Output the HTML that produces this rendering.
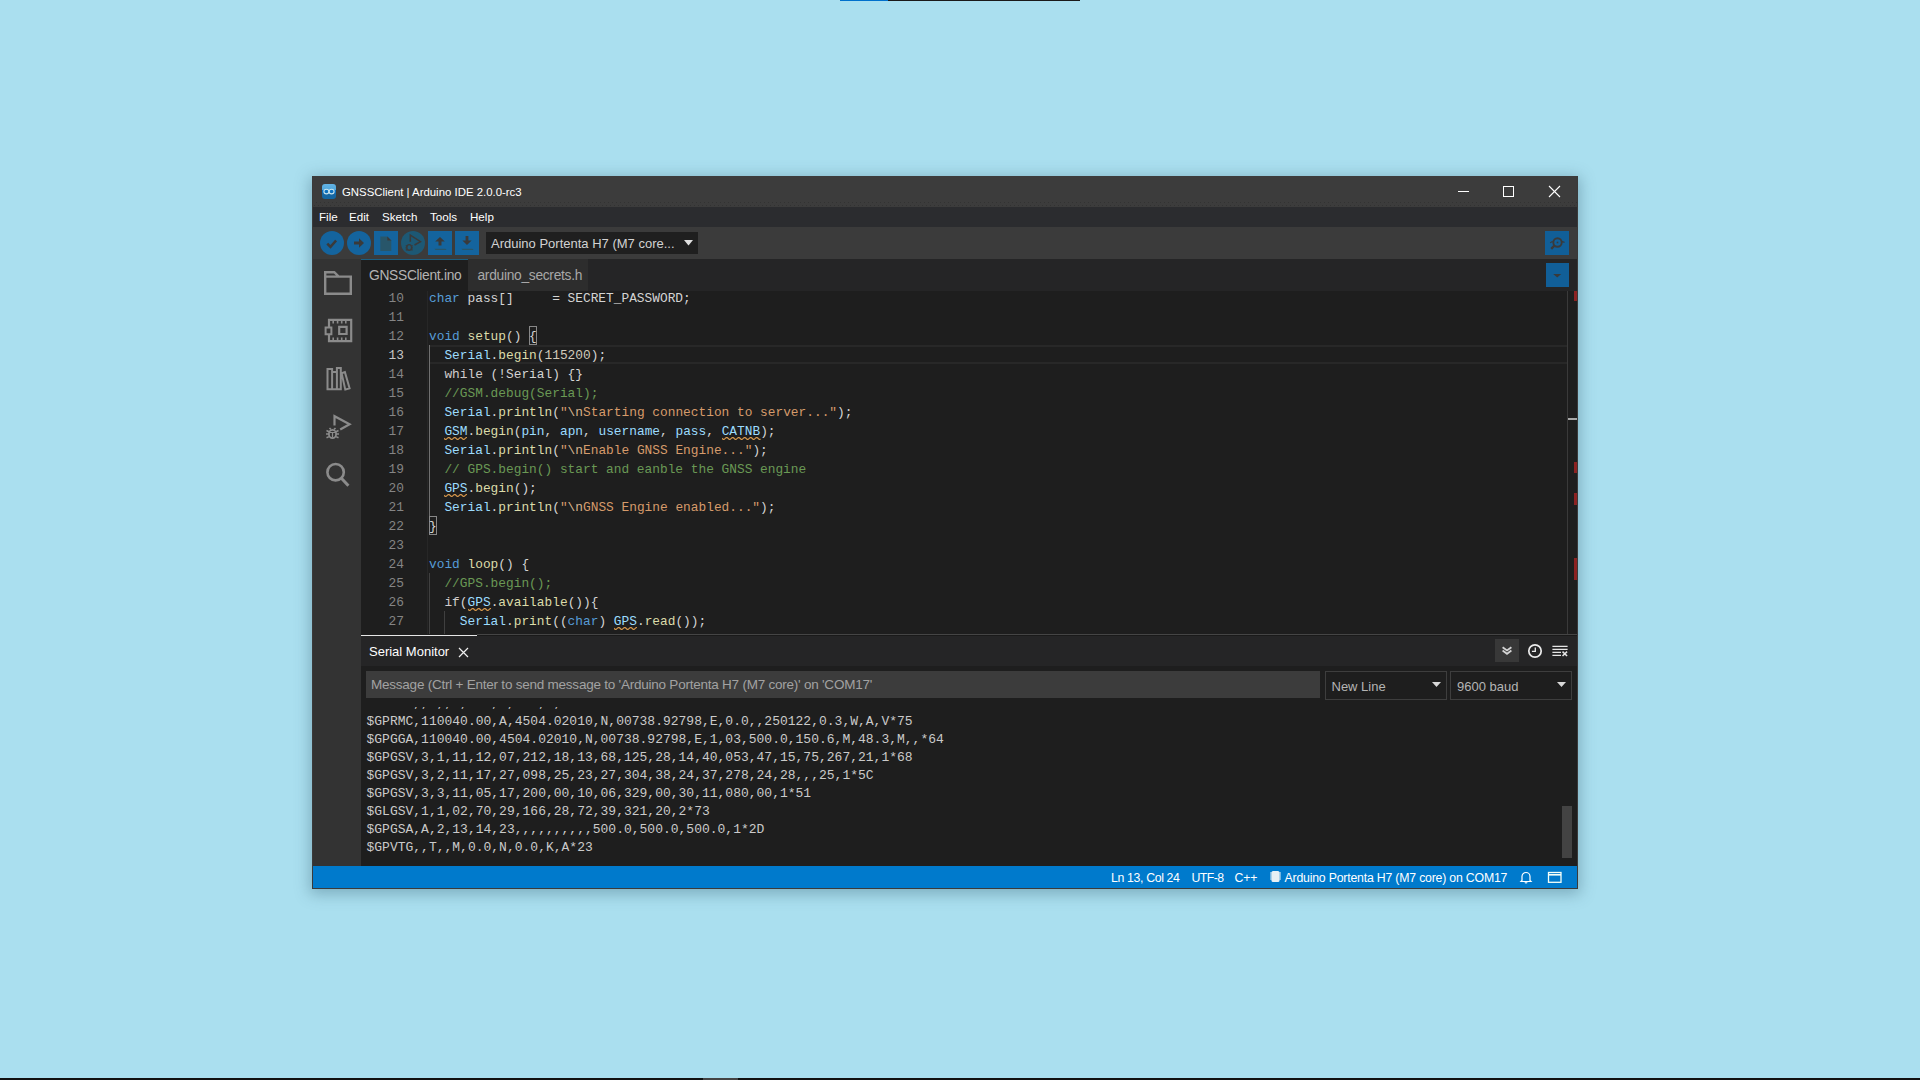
<!DOCTYPE html>
<html><head><meta charset="utf-8">
<style>
*{margin:0;padding:0;box-sizing:border-box}
html,body{width:1920px;height:1080px;overflow:hidden;background:#aadfef;font-family:"Liberation Sans",sans-serif}
.abs,#win div,#win svg,#win span.t{position:absolute}
.t{white-space:pre;line-height:20px;height:20px}
#topbar{left:840px;top:0;width:240px;height:1px;background:#1a1a1a}
#topbar i{position:absolute;left:0;top:0;width:48px;height:1px;background:#0070cc}
#botbar{left:0;top:1078px;width:1920px;height:2px;background:#111}
#botbar i{position:absolute;left:703px;top:0;width:35px;height:2px;background:#444}
#win{left:312px;top:176px;width:1266px;height:713px;background:#3a3a3a;box-shadow:0 3px 14px 2px rgba(40,80,100,.35)}
#title{left:1px;top:0px;width:1264px;height:31px;background:#3c3c3c}
#menu{left:1px;top:31px;width:1264px;height:20px;background:#2b2c2f}
#tool{left:1px;top:51px;width:1264px;height:32px;background:#3b3b3b}
#side{left:1px;top:83px;width:48px;height:607px;background:#333333}
#tabs{left:49px;top:83px;width:1216px;height:32px;background:#252526}
#editor{left:49px;top:115px;width:1216px;height:343px;background:#1e1e1e;overflow:hidden}
#panel{left:49px;top:458px;width:1216px;height:232px;background:#1e1e1e;overflow:hidden}
#status{left:1px;top:690px;width:1264px;height:22px;background:#007acc}
.menu{color:#fff;font-size:11.6px}
.btn{background:#14649e;width:24px;height:24px;top:4px}
.circ{border-radius:50%}
.ln{position:absolute;left:0;width:43px;text-align:right;font-family:"Liberation Mono",monospace;font-size:12.83px;line-height:19px;height:19px;padding-top:1px;white-space:pre}
.code{position:absolute;left:68px;font-family:"Liberation Mono",monospace;font-size:12.83px;line-height:19px;height:19px;padding-top:1px;white-space:pre}
.code b{font-weight:normal}
.sl{position:absolute;left:5.5px;font-family:"Liberation Mono",monospace;font-size:13px;line-height:18px;height:18px;white-space:pre;color:#cacaca}
</style></head><body>
<div id="topbar" class="abs"><i></i></div>
<div id="botbar" class="abs"><i></i></div>
<div id="win" class="abs">
  <div id="title">
    <div style="left:9px;top:8px;width:14px;height:15px;border-radius:3px;background:linear-gradient(#64b4e4 0,#4ea6dc 40%,#0a72c4 42%,#0d6cb6 62%,#1766a2 64%,#1466a0 100%)"></div>
    <svg style="left:9px;top:8px" width="14" height="15" viewBox="0 0 14 15"><g fill="none" stroke="#c4e2ec" stroke-width="1.1"><ellipse cx="4.4" cy="7.6" rx="2.5" ry="2.3"/><ellipse cx="9.6" cy="7.6" rx="2.5" ry="2.3"/></g></svg>
    <div style="left:0;top:26px;width:1264px;height:1px;background:repeating-linear-gradient(90deg,transparent 0 3px,#323232 3px 4px)"></div><div style="left:0;top:29px;width:1264px;height:1px;background:repeating-linear-gradient(90deg,transparent 0 1px,#323232 1px 2px,transparent 2px 4px)"></div>
    <span class="t" style="left:29px;top:6px;color:#fff;font-size:11.4px">GNSSClient | Arduino IDE 2.0.0-rc3</span>
    <svg style="left:1140px;top:5px" width="120" height="20" viewBox="0 0 120 20"><g stroke="#fff" stroke-width="1" fill="none" shape-rendering="crispEdges"><line x1="5" y1="10.5" x2="16" y2="10.5"/><rect x="50.5" y="5.5" width="10" height="10"/></g><g stroke="#fff" stroke-width="1.1" fill="none"><line x1="96" y1="5" x2="107" y2="16"/><line x1="107" y1="5" x2="96" y2="16"/></g></svg>
  </div>
  <div id="menu">
    <span class="t menu" style="left:6px;top:0px">File</span>
    <span class="t menu" style="left:36px;top:0px">Edit</span>
    <span class="t menu" style="left:69px;top:0px">Sketch</span>
    <span class="t menu" style="left:117px;top:0px">Tools</span>
    <span class="t menu" style="left:157px;top:0px">Help</span>
  </div>
  <div id="tool">
    <div class="btn circ" style="left:7px;top:4px"></div>
    <svg style="left:7px;top:4px" width="24" height="24" viewBox="0 0 24 24"><path d="M7.3 12.6l3.2 3.3 5.6-6.4" fill="none" stroke="#3a3a3a" stroke-width="2.6"/></svg>
    <div class="btn circ" style="left:34px;top:4px"></div>
    <svg style="left:34px;top:4px" width="24" height="24" viewBox="0 0 24 24"><path d="M7 10.5h5V7.2l5 4.8-5 4.8v-3.3H7z" fill="#3a3a3a"/></svg>
    <div class="btn" style="left:61px;top:4px"></div>
    <svg style="left:61px;top:4px" width="24" height="24" viewBox="0 0 24 24"><path d="M6.3 5.5h7l4 4v10.5h-11z" fill="#28566a"/><path d="M13.3 5.5v4h4z" fill="#3a3a3a"/></svg>
    <div class="btn circ" style="left:88px;top:4px;background:#1d5874"></div>
    <svg style="left:88px;top:4px" width="24" height="24" viewBox="0 0 24 24"><g fill="none" stroke="#3a3a3a"><path d="M9.3 10.8V4.2l10.2 6.4-6 3.4" stroke-width="1.5"/><ellipse cx="8.2" cy="16.4" rx="2.4" ry="2.8" stroke-width="1.4"/><path d="M4.8 14.5l1.2 0.8M11.6 14.5l-1.2 0.8M4.5 16.8h1.4M10.5 16.8h1.4M4.8 19.2l1.2-0.8M11.6 19.2l-1.2-0.8" stroke-width="1.2"/></g></svg>
    <div class="btn" style="left:115px;top:4px"></div>
    <svg style="left:115px;top:4px" width="24" height="24" viewBox="0 0 24 24"><path d="M12 6l-4.8 4.6h3.3v4h3v-4h3.3z" fill="#3a3a3a"/><path d="M6.5 17.8h11l1 1.2H7.5z" fill="#28566a"/></svg>
    <div class="btn" style="left:142px;top:4px"></div>
    <svg style="left:142px;top:4px" width="24" height="24" viewBox="0 0 24 24"><path d="M12 14l-4.6-4.6h3.2V5h2.8v4.4h3.2z" fill="#3a3a3a"/><path d="M6.5 17.8h11l1 1.2H7.5z" fill="#28566a"/></svg>
    <div style="left:173px;top:5px;width:212px;height:22px;background:#1f1f1f"></div>
    <span class="t" style="left:178px;top:7px;color:#d2d2d2;font-size:13px">Arduino Portenta H7 (M7 core...</span>
    <svg style="left:371px;top:13px" width="9" height="6" viewBox="0 0 9 6"><path d="M0 0h9L4.5 5.5z" fill="#e0e0e0"/></svg>
    <div class="btn" style="left:1232px;top:4px;width:24px;height:24px;background:#115f98"></div>
    <svg style="left:1232px;top:4px" width="24" height="24" viewBox="0 0 24 24"><g fill="none" stroke="#3a3a3a"><circle cx="12.5" cy="11.5" r="4.2" stroke-width="1.9"/><path d="M9.6 14.4l-3.4 3.4" stroke-width="2.4"/><path d="M5.2 12c0.8-1 1.6-1.4 2.5-1.4M17 10.6c1 0 1.8 0.8 2.6 0.4" stroke-width="1.1"/></g><rect x="11.7" y="10.7" width="1.6" height="1.6" fill="#3a3a3a"/></svg>
  </div>
  <div id="side">
    <svg style="left:0;top:0" width="48" height="240" viewBox="0 0 48 240"><g fill="none" stroke="#8b8b8b" stroke-width="2.4">
      <path d="M12.2 34.8V13.2H21.3l4.4 4.4H37.8V34.8z M12.2 17.6H25.7"/>
      <path d="M16 60.8H38.2V82.2H16z" stroke-width="2.2"/>
      <path d="M12.6 68.4H18.4V75.2H12.6z" fill="#333" stroke-width="2"/>
      <path d="M26.2 67.8H33.6V75H26.2z" stroke-width="2.2"/>
      <path d="M20.2 61.5v3M24.6 61.5v3M28.7 61.5v3M32.8 61.5v3M20.2 78.5v3M24.6 78.5v3M28.7 78.5v3M32.8 78.5v3" stroke-width="1.6"/>
      <path d="M14.5 130.2V109.9H19.1V130.2M19.1 112.9H23.9V130.2M23.9 130.2V109H27.8V130.2M13.5 130.2H28.8M28.6 114.2l3.3-1.1 4.7 16.2-4.3 1.3z" stroke-width="2"/>
      <path d="M21.5 166.5V157.2L36.6 165.2 27.2 170.5" stroke-width="2.2"/>
      <path d="M13.5 171.5l2.5 1.2M25.5 171.5l-2.5 1.2M13 175h3M23 175h3M13.5 178.8l2.5-1.2M25.5 178.8l-2.5-1.2M16.5 169l1.5 1.5M22.5 169l-1.5 1.5" stroke-width="1.6"/>
      <ellipse cx="19.5" cy="175" rx="3.6" ry="4.2" stroke-width="1.8"/><path d="M16.5 173.5h6M19.5 173.5v5" stroke-width="1.2"/>
      <circle cx="22.6" cy="213.2" r="8.2" stroke-width="2.6"/>
      <path d="M28.4 219.3l7 7.4" stroke-width="3"/>
    </g></svg>
  </div>
  <div id="tabs">
    <div style="left:0;top:0;width:107px;height:32px;background:#1e1e1e;border-top:1px solid #1c5e80"></div>
    <div style="left:107px;top:0;width:120px;height:32px;background:#2d2d2d"></div>
    <span class="t" style="left:8px;top:7px;color:#b4b4b4;font-size:13.8px;letter-spacing:-0.3px">GNSSClient.ino</span>
    <span class="t" style="left:116.5px;top:7px;color:#a8a8a8;font-size:13.8px;letter-spacing:-0.3px">arduino_secrets.h</span>
    <div style="left:1185px;top:4px;width:23px;height:24px;background:#115f98"></div>
    <svg style="left:1185px;top:4px" width="23" height="24" viewBox="0 0 23 24"><path d="M7.2 11h8l-4 3.6z" fill="#3a3a3a"/></svg>
  </div>
  <div id="editor">
<div style="left:66px;top:0;width:1px;height:343px;background:#272727"></div>
<div style="left:68px;top:54px;width:1138px;height:2px;background:#282828"></div>
<div style="left:68px;top:71px;width:1138px;height:2px;background:#282828"></div>
<div style="left:68px;top:54px;width:1px;height:171px;background:#707070"></div>
<div style="left:68px;top:282px;width:1px;height:76px;background:#404040"></div>
<div style="left:83px;top:320px;width:1px;height:38px;background:#404040"></div>
<div style="left:168.1px;top:35px;width:8px;height:19px;border:1px solid #888"></div>
<div style="left:68px;top:225px;width:8px;height:19px;border:1px solid #888"></div>
<span class="ln" style="top:-3px;color:#858585">10</span>
<span class="code" style="top:-3px"><b style="color:#569cd6">char</b><b style="color:#d4d4d4"> pass[]     = SECRET_PASSWORD;</b></span>
<span class="ln" style="top:16px;color:#858585">11</span>
<span class="ln" style="top:35px;color:#858585">12</span>
<span class="code" style="top:35px"><b style="color:#569cd6">void</b><b style="color:#d4d4d4"> </b><b style="color:#dcdcaa">setup</b><b style="color:#d4d4d4">() {</b></span>
<span class="ln" style="top:54px;color:#c6c6c6">13</span>
<span class="code" style="top:54px"><b style="color:#d4d4d4">  </b><b style="color:#9cdcfe">Serial</b><b style="color:#d4d4d4">.</b><b style="color:#dcdcaa">begin</b><b style="color:#d4d4d4">(</b><b style="color:#d2cbbb">115200</b><b style="color:#d4d4d4">);</b></span>
<span class="ln" style="top:73px;color:#858585">14</span>
<span class="code" style="top:73px"><b style="color:#d4d4d4">  </b><b style="color:#d0cccc">while</b><b style="color:#d4d4d4"> (!</b><b style="color:#d4d4d4">Serial</b><b style="color:#d4d4d4">) {}</b></span>
<span class="ln" style="top:92px;color:#858585">15</span>
<span class="code" style="top:92px"><b style="color:#d4d4d4">  </b><b style="color:#6a9955">//GSM.debug(Serial);</b></span>
<span class="ln" style="top:111px;color:#858585">16</span>
<span class="code" style="top:111px"><b style="color:#d4d4d4">  </b><b style="color:#9cdcfe">Serial</b><b style="color:#d4d4d4">.</b><b style="color:#dcdcaa">println</b><b style="color:#d4d4d4">(</b><b style="color:#d69b6b">&quot;</b><b style="color:#d8b48e">\n</b><b style="color:#d69b6b">Starting connection to server...&quot;</b><b style="color:#d4d4d4">);</b></span>
<span class="ln" style="top:130px;color:#858585">17</span>
<span class="code" style="top:130px"><b style="color:#d4d4d4">  </b><b style="color:#9cdcfe">GSM</b><b style="color:#d4d4d4">.</b><b style="color:#dcdcaa">begin</b><b style="color:#d4d4d4">(</b><b style="color:#9cdcfe">pin</b><b style="color:#d4d4d4">, </b><b style="color:#9cdcfe">apn</b><b style="color:#d4d4d4">, </b><b style="color:#9cdcfe">username</b><b style="color:#d4d4d4">, </b><b style="color:#9cdcfe">pass</b><b style="color:#d4d4d4">, </b><b style="color:#9cdcfe">CATNB</b><b style="color:#d4d4d4">);</b></span>
<span class="ln" style="top:149px;color:#858585">18</span>
<span class="code" style="top:149px"><b style="color:#d4d4d4">  </b><b style="color:#9cdcfe">Serial</b><b style="color:#d4d4d4">.</b><b style="color:#dcdcaa">println</b><b style="color:#d4d4d4">(</b><b style="color:#d69b6b">&quot;</b><b style="color:#d8b48e">\n</b><b style="color:#d69b6b">Enable GNSS Engine...&quot;</b><b style="color:#d4d4d4">);</b></span>
<span class="ln" style="top:168px;color:#858585">19</span>
<span class="code" style="top:168px"><b style="color:#d4d4d4">  </b><b style="color:#6a9955">// GPS.begin() start and eanble the GNSS engine</b></span>
<span class="ln" style="top:187px;color:#858585">20</span>
<span class="code" style="top:187px"><b style="color:#d4d4d4">  </b><b style="color:#9cdcfe">GPS</b><b style="color:#d4d4d4">.</b><b style="color:#dcdcaa">begin</b><b style="color:#d4d4d4">();</b></span>
<span class="ln" style="top:206px;color:#858585">21</span>
<span class="code" style="top:206px"><b style="color:#d4d4d4">  </b><b style="color:#9cdcfe">Serial</b><b style="color:#d4d4d4">.</b><b style="color:#dcdcaa">println</b><b style="color:#d4d4d4">(</b><b style="color:#d69b6b">&quot;</b><b style="color:#d8b48e">\n</b><b style="color:#d69b6b">GNSS Engine enabled...&quot;</b><b style="color:#d4d4d4">);</b></span>
<span class="ln" style="top:225px;color:#858585">22</span>
<span class="code" style="top:225px"><b style="color:#d4d4d4">}</b></span>
<span class="ln" style="top:244px;color:#858585">23</span>
<span class="ln" style="top:263px;color:#858585">24</span>
<span class="code" style="top:263px"><b style="color:#569cd6">void</b><b style="color:#d4d4d4"> </b><b style="color:#dcdcaa">loop</b><b style="color:#d4d4d4">() {</b></span>
<span class="ln" style="top:282px;color:#858585">25</span>
<span class="code" style="top:282px"><b style="color:#d4d4d4">  </b><b style="color:#6a9955">//GPS.begin();</b></span>
<span class="ln" style="top:301px;color:#858585">26</span>
<span class="code" style="top:301px"><b style="color:#d4d4d4">  </b><b style="color:#d0cccc">if</b><b style="color:#d4d4d4">(</b><b style="color:#9cdcfe">GPS</b><b style="color:#d4d4d4">.</b><b style="color:#dcdcaa">available</b><b style="color:#d4d4d4">()){</b></span>
<span class="ln" style="top:320px;color:#858585">27</span>
<span class="code" style="top:320px"><b style="color:#d4d4d4">    </b><b style="color:#9cdcfe">Serial</b><b style="color:#d4d4d4">.</b><b style="color:#dcdcaa">print</b><b style="color:#d4d4d4">((</b><b style="color:#569cd6">char</b><b style="color:#d4d4d4">) </b><b style="color:#9cdcfe">GPS</b><b style="color:#d4d4d4">.</b><b style="color:#dcdcaa">read</b><b style="color:#d4d4d4">());</b></span>
<svg style="left:83.4px;top:145px" width="24" height="5"><polyline points="0.00,2.24 0.50,2.76 1.00,3.19 1.50,3.43 2.00,3.40 2.50,3.12 3.00,2.66 3.50,2.14 4.00,1.71 4.50,1.47 5.00,1.50 5.50,1.78 6.00,2.24 6.50,2.76 7.00,3.19 7.50,3.43 8.00,3.40 8.50,3.12 9.00,2.66 9.50,2.14 10.00,1.71 10.50,1.47 11.00,1.50 11.50,1.78 12.00,2.24 12.50,2.76 13.00,3.19 13.50,3.43 14.00,3.40 14.50,3.12 15.00,2.66 15.50,2.14 16.00,1.71 16.50,1.47 17.00,1.50 17.50,1.78 18.00,2.24 18.50,2.76 19.00,3.19 19.50,3.43 20.00,3.40 20.50,3.12 21.00,2.66 21.50,2.14 22.00,1.71 22.50,1.47 23.00,1.50" fill="none" stroke="#d99a4e" stroke-width="1.15"/></svg>
<svg style="left:360.6px;top:145px" width="40" height="5"><polyline points="0.00,2.24 0.50,2.76 1.00,3.19 1.50,3.43 2.00,3.40 2.50,3.12 3.00,2.66 3.50,2.14 4.00,1.71 4.50,1.47 5.00,1.50 5.50,1.78 6.00,2.24 6.50,2.76 7.00,3.19 7.50,3.43 8.00,3.40 8.50,3.12 9.00,2.66 9.50,2.14 10.00,1.71 10.50,1.47 11.00,1.50 11.50,1.78 12.00,2.24 12.50,2.76 13.00,3.19 13.50,3.43 14.00,3.40 14.50,3.12 15.00,2.66 15.50,2.14 16.00,1.71 16.50,1.47 17.00,1.50 17.50,1.78 18.00,2.24 18.50,2.76 19.00,3.19 19.50,3.43 20.00,3.40 20.50,3.12 21.00,2.66 21.50,2.14 22.00,1.71 22.50,1.47 23.00,1.50 23.50,1.78 24.00,2.24 24.50,2.76 25.00,3.19 25.50,3.43 26.00,3.40 26.50,3.12 27.00,2.66 27.50,2.14 28.00,1.71 28.50,1.47 29.00,1.50 29.50,1.78 30.00,2.24 30.50,2.76 31.00,3.19 31.50,3.43 32.00,3.40 32.50,3.12 33.00,2.66 33.50,2.14 34.00,1.71 34.50,1.47 35.00,1.50 35.50,1.78 36.00,2.24 36.50,2.76 37.00,3.19 37.50,3.43 38.00,3.40 38.50,3.12" fill="none" stroke="#d99a4e" stroke-width="1.15"/></svg>
<svg style="left:83.4px;top:202px" width="24" height="5"><polyline points="0.00,2.24 0.50,2.76 1.00,3.19 1.50,3.43 2.00,3.40 2.50,3.12 3.00,2.66 3.50,2.14 4.00,1.71 4.50,1.47 5.00,1.50 5.50,1.78 6.00,2.24 6.50,2.76 7.00,3.19 7.50,3.43 8.00,3.40 8.50,3.12 9.00,2.66 9.50,2.14 10.00,1.71 10.50,1.47 11.00,1.50 11.50,1.78 12.00,2.24 12.50,2.76 13.00,3.19 13.50,3.43 14.00,3.40 14.50,3.12 15.00,2.66 15.50,2.14 16.00,1.71 16.50,1.47 17.00,1.50 17.50,1.78 18.00,2.24 18.50,2.76 19.00,3.19 19.50,3.43 20.00,3.40 20.50,3.12 21.00,2.66 21.50,2.14 22.00,1.71 22.50,1.47 23.00,1.50" fill="none" stroke="#d99a4e" stroke-width="1.15"/></svg>
<svg style="left:106.5px;top:316px" width="24" height="5"><polyline points="0.00,2.24 0.50,2.76 1.00,3.19 1.50,3.43 2.00,3.40 2.50,3.12 3.00,2.66 3.50,2.14 4.00,1.71 4.50,1.47 5.00,1.50 5.50,1.78 6.00,2.24 6.50,2.76 7.00,3.19 7.50,3.43 8.00,3.40 8.50,3.12 9.00,2.66 9.50,2.14 10.00,1.71 10.50,1.47 11.00,1.50 11.50,1.78 12.00,2.24 12.50,2.76 13.00,3.19 13.50,3.43 14.00,3.40 14.50,3.12 15.00,2.66 15.50,2.14 16.00,1.71 16.50,1.47 17.00,1.50 17.50,1.78 18.00,2.24 18.50,2.76 19.00,3.19 19.50,3.43 20.00,3.40 20.50,3.12 21.00,2.66 21.50,2.14 22.00,1.71 22.50,1.47 23.00,1.50" fill="none" stroke="#d99a4e" stroke-width="1.15"/></svg>
<svg style="left:252.8px;top:335px" width="24" height="5"><polyline points="0.00,2.24 0.50,2.76 1.00,3.19 1.50,3.43 2.00,3.40 2.50,3.12 3.00,2.66 3.50,2.14 4.00,1.71 4.50,1.47 5.00,1.50 5.50,1.78 6.00,2.24 6.50,2.76 7.00,3.19 7.50,3.43 8.00,3.40 8.50,3.12 9.00,2.66 9.50,2.14 10.00,1.71 10.50,1.47 11.00,1.50 11.50,1.78 12.00,2.24 12.50,2.76 13.00,3.19 13.50,3.43 14.00,3.40 14.50,3.12 15.00,2.66 15.50,2.14 16.00,1.71 16.50,1.47 17.00,1.50 17.50,1.78 18.00,2.24 18.50,2.76 19.00,3.19 19.50,3.43 20.00,3.40 20.50,3.12 21.00,2.66 21.50,2.14 22.00,1.71 22.50,1.47 23.00,1.50" fill="none" stroke="#d99a4e" stroke-width="1.15"/></svg>
<div style="left:1206px;top:0;width:1px;height:343px;background:#3a3a3a"></div>
<div style="left:1213px;top:0px;width:3px;height:10px;background:#8b2222"></div>
<div style="left:1213px;top:171px;width:3px;height:11px;background:#8b2222"></div>
<div style="left:1213px;top:202px;width:3px;height:12px;background:#8b2222"></div>
<div style="left:1213px;top:267px;width:3px;height:22px;background:#8b2222"></div>
<div style="left:1207px;top:127px;width:9px;height:2px;background:#a8a8a8"></div>
  </div>
  <div id="panel">
    <div style="left:116px;top:0px;width:1100px;height:1px;background:#454545"></div><div style="left:116px;top:1px;width:1100px;height:1px;background:#1a1a1a"></div>
    <div style="left:0;top:1px;width:116px;height:1px;background:#e6e6e6"></div>
    <div style="left:0;top:2px;width:1216px;height:30px;background:#252526"></div>
    <span class="t" style="left:8px;top:8px;color:#fff;font-size:13px">Serial Monitor</span>
    <svg style="left:97px;top:13px" width="11" height="11" viewBox="0 0 11 11"><path d="M1 1l9 9M10 1l-9 9" stroke="#f0f0f0" stroke-width="1.2"/></svg>
    <div style="left:1134px;top:5px;width:24px;height:23px;background:#383838"></div>
    <svg style="left:1134px;top:5px" width="24" height="23" viewBox="0 0 24 23"><path d="M7.6 8.2l4.4 3.2 4.4-3.2M7.6 11.6l4.4 3.2 4.4-3.2" fill="none" stroke="#d4d4d4" stroke-width="1.8"/></svg>
    <svg style="left:1166px;top:9px" width="16" height="16" viewBox="0 0 16 16"><circle cx="8" cy="8" r="6.2" fill="none" stroke="#ececec" stroke-width="1.7"/><path d="M8.3 4.6v3.7H4.9" fill="none" stroke="#ececec" stroke-width="1.3"/></svg>
    <svg style="left:1190px;top:11px" width="18" height="14" viewBox="0 0 18 14"><path d="M1.4 1.4h15.2M1.4 4.4h15.2M1.4 7.4h8.6M1.4 10.4h8.6" stroke="#e6e6e6" stroke-width="1.2"/><path d="M11.5 6.6l4.6 4.4M16.1 6.6l-4.6 4.4" stroke="#e6e6e6" stroke-width="1.5"/></svg>
    <div style="left:5px;top:37px;width:954px;height:27px;background:#3c3c3c"></div>
    <span class="t" style="left:10px;top:41px;color:#a2a2a2;font-size:13.5px;letter-spacing:-0.23px">Message (Ctrl + Enter to send message to 'Arduino Portenta H7 (M7 core)' on 'COM17'</span>
    <div style="left:964px;top:37px;width:122px;height:29px;border:1px solid #3e3e3e"></div>
    <span class="t" style="left:970.5px;top:43px;color:#b4b4b4;font-size:13px">New Line</span>
    <svg style="left:1071px;top:48px" width="9" height="6" viewBox="0 0 9 6"><path d="M0 0h9L4.5 5z" fill="#d8d8d8"/></svg>
    <div style="left:1089px;top:37px;width:122px;height:29px;border:1px solid #3e3e3e"></div>
    <span class="t" style="left:1096px;top:43px;color:#b4b4b4;font-size:13px">9600 baud</span>
    <svg style="left:1196px;top:48px" width="9" height="6" viewBox="0 0 9 6"><path d="M0 0h9L4.5 5z" fill="#d8d8d8"/></svg>
    <div style="left:0;top:73px;width:1216px;height:159px;overflow:hidden">
<span class="sl" style="top:-12.46px"> GPVTG,,T,,M,0.0,N,0.0,K,A*23</span>
<span class="sl" style="top:5.54px">$GPRMC,110040.00,A,4504.02010,N,00738.92798,E,0.0,,250122,0.3,W,A,V*75</span>
<span class="sl" style="top:23.54px">$GPGGA,110040.00,4504.02010,N,00738.92798,E,1,03,500.0,150.6,M,48.3,M,,*64</span>
<span class="sl" style="top:41.54px">$GPGSV,3,1,11,12,07,212,18,13,68,125,28,14,40,053,47,15,75,267,21,1*68</span>
<span class="sl" style="top:59.54px">$GPGSV,3,2,11,17,27,098,25,23,27,304,38,24,37,278,24,28,,,25,1*5C</span>
<span class="sl" style="top:77.54px">$GPGSV,3,3,11,05,17,200,00,10,06,329,00,30,11,080,00,1*51</span>
<span class="sl" style="top:95.54px">$GLGSV,1,1,02,70,29,166,28,72,39,321,20,2*73</span>
<span class="sl" style="top:113.54px">$GPGSA,A,2,13,14,23,,,,,,,,,,500.0,500.0,500.0,1*2D</span>
<span class="sl" style="top:131.54px">$GPVTG,,T,,M,0.0,N,0.0,K,A*23</span>
    </div>
    <div style="left:1201px;top:172px;width:10px;height:52px;background:#434343"></div>
  </div>
  <div id="status">
    <span class="t" style="left:798px;top:1.5px;color:#fff;font-size:12.3px;letter-spacing:-0.35px">Ln 13, Col 24</span>
    <span class="t" style="left:878.5px;top:1.5px;color:#fff;font-size:12.3px;letter-spacing:-0.55px">UTF-8</span>
    <span class="t" style="left:921.5px;top:1.5px;color:#fff;font-size:12.3px;letter-spacing:-0.15px">C++</span>
    <svg style="left:956px;top:4px" width="13" height="13" viewBox="0 0 13 13"><rect x="2.5" y="1" width="8" height="11" rx="1.5" fill="#e8f0f4"/><path d="M1 3h2M1 5h2M1 7h2M1 9h2M10 3h2M10 5h2M10 7h2M10 9h2" stroke="#e8f0f4" stroke-width="1"/></svg>
    <span class="t" style="left:971.5px;top:1.5px;color:#fff;font-size:12.3px;letter-spacing:-0.2px">Arduino Portenta H7 (M7 core) on COM17</span>
    <svg style="left:1206px;top:4px" width="14" height="14" viewBox="0 0 14 14"><path d="M3 10.5V6.5a4 4 0 0 1 8 0v4l1 1H2z" fill="none" stroke="#fff" stroke-width="1.2"/><path d="M5.5 12.2a1.5 1.3 0 0 0 3 0" fill="#fff"/></svg>
    <svg style="left:1234px;top:5px" width="16" height="14" viewBox="0 0 16 14"><rect x="1.5" y="1.5" width="12.5" height="9.8" fill="none" stroke="#f4fff8" stroke-width="1.3"/><path d="M1.5 3.8h12.5" stroke="#f4fff8" stroke-width="1.6"/></svg>
  </div>
</div>
</body></html>
